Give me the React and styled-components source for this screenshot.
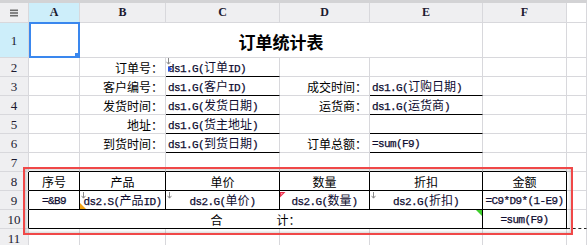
import React from 'react';
import styled, { createGlobalStyle } from 'styled-components';

const Global = createGlobalStyle`
  html, body { margin: 0; padding: 0; background: #fff; overflow: hidden; }
  body { font-family: "Noto Sans CJK SC", "Noto Sans", sans-serif; }
`;

const GRID = '#d8d8dc';
const BLACK = '#000';
const HEAD_BG = '#efeff1';
const HEAD_ACTIVE = '#cdeefa';

const Page = styled.div`
  width: 587px;
  height: 245px;
  overflow: hidden;
  display: flex;
  flex-direction: column;
  background: #fff;
`;

const TopStrip = styled.div`
  flex: none;
  height: 3px;
  background: #d3d3d5;
`;

const Sheet = styled.div`
  position: relative;
  display: grid;
  grid-template-columns: 29px 51px 86px 114px 90px 113px 84px 1fr;
  grid-template-rows: 20px 35px repeat(11, 19px);
`;

const Cell = styled.div`
  box-sizing: border-box;
  position: relative;
  min-width: 0;
  display: flex;
  align-items: center;
  justify-content: ${(p) =>
    p.$align === 'left' ? 'flex-start' : p.$align === 'right' ? 'flex-end' : 'center'};
  padding: 2px 2px 0 2px;
  white-space: nowrap;
  background: ${(p) => p.$bg || '#fff'};
  border-right: 1px solid ${(p) => p.$r || GRID};
  border-bottom: 1px ${(p) => (p.$dash ? 'dashed' : 'solid')} ${(p) => p.$b || GRID};
  grid-column: ${(p) => (p.$span ? `span ${p.$span}` : 'auto')};
`;

const ColHead = styled(Cell)`
  padding: 0;
  background: ${(p) => (p.$active ? HEAD_ACTIVE : p.$blank ? '#fff' : HEAD_BG)};
  font-family: "Liberation Serif", "DejaVu Serif", serif;
  font-weight: bold;
  font-size: 12px;
  color: #1c1a30;
`;

const RowHead = styled(Cell)`
  padding: 2px 0 0 0;
  background: ${(p) => (p.$active ? HEAD_ACTIVE : HEAD_BG)};
  font-family: "Liberation Serif", "DejaVu Serif", serif;
  font-size: 13px;
  color: #1c1a30;
`;

const Label = styled.span`
  font-family: "Noto Sans CJK SC", "Noto Sans", sans-serif;
  font-size: 12px;
  line-height: 1;
  color: #000;
`;

const Title = styled.span`
  font-family: "Noto Sans CJK SC", "Noto Sans", sans-serif;
  font-size: 17px;
  font-weight: bold;
  line-height: 1;
  color: #000;
`;

const Code = styled.span`
  font-family: "Liberation Mono", "DejaVu Sans Mono", monospace;
  font-size: 11px;
  letter-spacing: -0.6px;
  line-height: 1;
  color: #0e0c30;
  -webkit-text-stroke: 0.25px #0e0c30;
`;

const Han = styled.span`
  font-family: "Noto Sans CJK SC", sans-serif;
  font-size: 12px;
  letter-spacing: 0;
  -webkit-text-stroke: 0;
`;

const TotalText = styled.span`
  display: flex;
  gap: 54px;
  font-family: "Noto Sans CJK SC", "Noto Sans", sans-serif;
  font-size: 12px;
  line-height: 1;
  color: #000;
`;

const Selection = styled.div`
  position: absolute;
  top: -1px;
  left: 0;
  right: -1px;
  bottom: -1px;
  border: 2px solid #3a87ee;
  pointer-events: none;
`;

const Handle = styled.div`
  position: absolute;
  right: -3px;
  bottom: -3px;
  width: 6px;
  height: 6px;
  background: #3a87ee;
`;

const RangeFrame = styled.div`
  position: absolute;
  left: 23px;
  top: 164px;
  width: 550px;
  height: 68px;
  box-sizing: border-box;
  border: 2px solid #f04848;
  box-shadow: inset 0 0 3px 1px rgba(0, 0, 0, 0.18);
  pointer-events: none;
`;

const Mark = styled.svg`
  position: absolute;
  left: ${(p) => p.$x ?? 0}px;
  top: ${(p) => p.$y ?? 0}px;
`;

const Corner = styled.div`
  position: absolute;
  width: 0;
  height: 0;
  ${(p) =>
    p.$pos === 'bl'
      ? `left: 0; bottom: 0; border-left: 6px solid ${p.$c}; border-top: 6px solid transparent;`
      : `right: 0; top: 0; border-right: 6px solid ${p.$c}; border-bottom: 6px solid transparent;`}
`;

const MenuIcon = () => (
  <svg width="8" height="8" viewBox="0 0 8 8">
    <rect x="0" y="0.5" width="8" height="1.6" fill="#6c6c6c" />
    <rect x="0" y="3.2" width="8" height="1.6" fill="#6c6c6c" />
    <rect x="0" y="5.9" width="8" height="1.6" fill="#6c6c6c" />
  </svg>
);

const DownArrow = ({ x = 1, y = 1 }) => (
  <Mark $x={x} $y={y} width="5" height="7" viewBox="0 0 5 7">
    <path d="M2.5 0 V6" stroke="#8a8a8a" strokeWidth="1" />
    <path d="M0.5 3.8 L2.5 6.2 L4.5 3.8" stroke="#8a8a8a" strokeWidth="1" fill="none" />
  </Mark>
);

const BlueMark = () => (
  <Mark $x={2} $y={8} width="5" height="6" viewBox="0 0 5 6">
    <path d="M0 0 L4.5 3 L0 6 Z" fill="#2a55e0" />
  </Mark>
);

const RedFlag = () => (
  <Mark $x={0} $y={1} width="6" height="6" viewBox="0 0 6 6">
    <path d="M0 0 H5.5 L0 5.5 Z" fill="#e8304e" />
    <path d="M1 1 H3 L1 3 Z" fill="#ff9aa8" />
  </Mark>
);

const HAN = /([\u4e00-\u9fff]+)/;

function Formula({ text }) {
  const parts = text.split(HAN).filter(Boolean);
  return (
    <Code>
      {parts.map((p, i) =>
        HAN.test(p) ? <Han key={i}>{p}</Han> : <React.Fragment key={i}>{p}</React.Fragment>
      )}
    </Code>
  );
}

const LETTERS = ['A', 'B', 'C', 'D', 'E', 'F'];

function FormRow({ n, label, value, label2, value2, line2 }) {
  return (
    <>
      <RowHead>{n}</RowHead>
      <Cell />
      <Cell $align="right">{label && <Label>{label}</Label>}</Cell>
      <Cell $align="left" $b={BLACK}>
        {value && <Formula text={value} />}
      </Cell>
      <Cell $align="right">{label2 && <Label>{label2}</Label>}</Cell>
      <Cell $align="left" $b={line2 ? BLACK : undefined}>
        {value2 && <Formula text={value2} />}
      </Cell>
      <Cell />
      <Cell />
    </>
  );
}

function BlankRow({ n, b }) {
  return (
    <>
      <RowHead>{n}</RowHead>
      {LETTERS.map((l) => (
        <Cell key={l} $b={b} />
      ))}
      <Cell />
    </>
  );
}

export default function App() {
  const heads = ['序号', '产品', '单价', '数量', '折扣', '金额'];
  return (
    <>
      <Global />
      <Page>
        <TopStrip />
        <Sheet>
          {/* column headers */}
          <ColHead>
            <MenuIcon />
          </ColHead>
          {LETTERS.map((l) => (
            <ColHead key={l} $active={l === 'A'}>
              {l}
            </ColHead>
          ))}
          <ColHead $blank />

          {/* row 1 */}
          <RowHead $active>1</RowHead>
          <Cell>
            <Selection>
              <Handle />
            </Selection>
          </Cell>
          <Cell $span={4}>
            <Title>订单统计表</Title>
          </Cell>
          <Cell />
          <Cell />

          {/* row 2 */}
          <RowHead>2</RowHead>
          <Cell />
          <Cell $align="right">
            <Label>订单号：</Label>
          </Cell>
          <Cell $align="left" $b={BLACK}>
            <DownArrow x={0} y={0} />
            <BlueMark />
            <Formula text="ds1.G(订单ID)" />
          </Cell>
          <Cell />
          <Cell />
          <Cell />
          <Cell />

          <FormRow n={3} label="客户编号：" value="ds1.G(客户ID)" label2="成交时间：" value2="ds1.G(订购日期)" line2 />
          <FormRow n={4} label="发货时间：" value="ds1.G(发货日期)" label2="运货商：" value2="ds1.G(运货商)" line2 />
          <FormRow n={5} label="地址：" value="ds1.G(货主地址)" line2 />
          <FormRow n={6} label="到货时间：" value="ds1.G(到货日期)" label2="订单总额：" value2="=sum(F9)" line2 />

          <BlankRow n={7} b={BLACK} />

          {/* row 8: table header */}
          <RowHead $r={BLACK}>8</RowHead>
          {heads.map((h) => (
            <Cell key={h} $r={BLACK} $b={BLACK}>
              <Label>{h}</Label>
            </Cell>
          ))}
          <Cell />

          {/* row 9: data */}
          <RowHead $r={BLACK}>9</RowHead>
          <Cell $r={BLACK} $b={BLACK}>
            <Formula text="=&B9" />
          </Cell>
          <Cell $r={BLACK} $b={BLACK}>
            <DownArrow />
            <Corner $pos="bl" $c="#f2a516" />
            <Formula text="ds2.S(产品ID)" />
          </Cell>
          <Cell $r={BLACK} $b={BLACK}>
            <DownArrow />
            <Formula text="ds2.G(单价)" />
          </Cell>
          <Cell $r={BLACK} $b={BLACK}>
            <RedFlag />
            <Formula text="ds2.G(数量)" />
          </Cell>
          <Cell $r={BLACK} $b={BLACK}>
            <DownArrow />
            <Formula text="ds2.G(折扣)" />
          </Cell>
          <Cell $r={BLACK} $b={BLACK}>
            <Formula text="=C9*D9*(1-E9)" />
          </Cell>
          <Cell />

          {/* row 10: total */}
          <RowHead $r={BLACK}>10</RowHead>
          <Cell $span={5} $r={BLACK} $b={BLACK}>
            <Corner $pos="tr" $c="#3fcf2c" />
            <TotalText>
              <span>合</span>
              <span>计：</span>
            </TotalText>
          </Cell>
          <Cell $r={BLACK} $b={BLACK}>
            <Formula text="=sum(F9)" />
          </Cell>
          <Cell $b="#222" $dash />

          <BlankRow n={11} />
          <BlankRow n={12} />

          <RangeFrame />
        </Sheet>
      </Page>
    </>
  );
}
